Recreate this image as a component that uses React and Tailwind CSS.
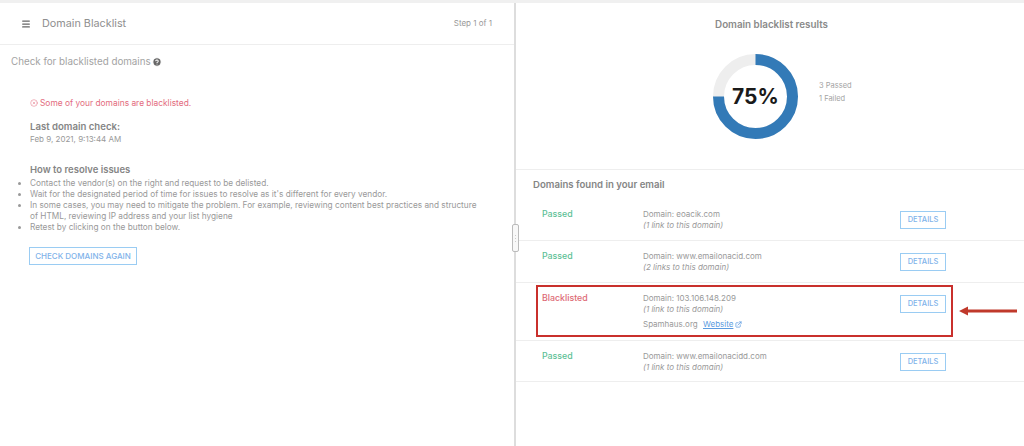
import { Menu, CircleHelp, CircleX, ExternalLink } from 'lucide-react';

const rows = [
  { status: 'Passed', domain: 'eoacik.com', links: '(1 link to this domain)', height: 'h-[42px]' },
  { status: 'Passed', domain: 'www.emailonacid.com', links: '(2 links to this domain)', height: 'h-[42px]' },
  { status: 'Blacklisted', domain: '103.106.148.209', links: '(1 link to this domain)', height: 'h-[58px]', vendor: true },
  { status: 'Passed', domain: 'www.emailonacidd.com', links: '(1 link to this domain)', height: 'h-[41px]' },
];

function DomainRow({ row }) {
  const failed = row.status === 'Blacklisted';
  return (
    <div className={`${row.height} flex border-b border-[#eeeeee] pl-[26px] pt-[8px]`}>
      <p className={`w-[101px] text-[8.8px] leading-[14px] font-medium ${failed ? 'text-[#dd6a75]' : 'text-[#5cc096]'}`}>{row.status}</p>
      <div className="w-[257px] text-[8px] leading-[11px] text-[#999999]">
        <p className="pt-[2px]">Domain: {row.domain}</p>
        <p className="italic">{row.links}</p>
        {row.vendor && (
          <p className="mt-[4px] flex items-center">
            <span className="w-[60px]">Spamhaus.org</span>
            <span className="text-[#5b9be0] underline">Website</span>
            <ExternalLink className="ml-[2px] size-[7px] text-[#5b9be0]" strokeWidth={2.5} />
          </p>
        )}
      </div>
      <button className="mt-[4px] h-[18px] w-[46px] border border-[#9accf3] text-[7.5px] font-medium text-[#7fb3ea]">DETAILS</button>
    </div>
  );
}

export default function App() {
  return (
    <div className="relative flex h-[446px] w-[1024px] overflow-hidden border-t-[3px] border-[#f0f0f0] bg-white font-['Inter',sans-serif]">
      <div className="w-[514px] shrink-0">
        <div className="flex h-[42px] items-center justify-between border-b border-[#eeeeee] pl-[21px] pr-[22px]">
          <div className="flex items-center gap-[11px] pt-[1px]">
            <Menu className="size-[10px] text-[#666666]" strokeWidth={3} />
            <span className="text-[10.8px] text-[#8f8f8f]">Domain Blacklist</span>
          </div>
          <span className="mb-[1px] text-[8px] text-[#999999]">Step 1 of 1</span>
        </div>
        <div className="flex items-center gap-[1px] pl-[11px] pt-[10px] text-[9.8px] leading-[14px] text-[#a3a3a3]">
          Check for blacklisted domains
          <CircleHelp className="size-[10px] fill-[#666666] text-white" strokeWidth={2.5} />
        </div>
        <div className="pl-[30px] pt-[28px]">
          <p className="flex items-center gap-[2px] text-[8.4px] leading-[12px] text-[#e36c7e]">
            <CircleX className="size-[8px]" strokeWidth={1.5} />
            Some of your domains are blacklisted.
          </p>
          <p className="pt-[11px] text-[9.6px] leading-[13px] font-semibold text-[#858585]">Last domain check:</p>
          <p className="pt-[1px] text-[8px] leading-[11px] text-[#999999]">Feb 9, 2021, 9:13:44 AM</p>
          <p className="pt-[18px] text-[9.5px] leading-[13px] font-semibold text-[#858585]">How to resolve issues</p>
          <ul className="mt-[2px] w-[455px] list-disc text-[8.25px] leading-[11px] text-[#999999]">
            <li>Contact the vendor(s) on the right and request to be delisted.</li>
            <li>Wait for the designated period of time for issues to resolve as it's different for every vendor.</li>
            <li>In some cases, you may need to mitigate the problem. For example, reviewing content best practices and structure of HTML, reviewing IP address and your list hygiene</li>
            <li>Retest by clicking on the button below.</li>
          </ul>
          <button className="-ml-[1px] mt-[14px] h-[18px] w-[108px] border border-[#9accf3] text-[8px] font-medium text-[#7fb3ea]">CHECK DOMAINS AGAIN</button>
        </div>
      </div>

      <div className="w-[2px] shrink-0 bg-[#dddddd]" />

      <div className="flex-1">
        <div className="flex h-[167px] flex-col items-center border-b border-[#eeeeee]">
          <p className="pt-[15px] pl-[3px] text-[9.8px] leading-[13px] font-semibold text-[#8a8a8a]">Domain blacklist results</p>
          <div className="mt-[23px] flex w-full pl-[197px]">
            <div className="relative size-[85px]">
              <svg viewBox="0 0 85 85" className="size-[85px]">
                <circle cx="42.5" cy="42.5" r="37" fill="none" stroke="#eeeeee" strokeWidth="11" />
                <circle cx="42.5" cy="42.5" r="37" fill="none" stroke="#337ab7" strokeWidth="11" pathLength="100" strokeDasharray="75 25" transform="rotate(-90 42.5 42.5)" />
              </svg>
              <span className="absolute inset-0 flex items-center justify-center text-[21px] font-bold text-[#1a1a1a]">75%</span>
            </div>
            <div className="pl-[21px] pt-[25px] text-[7.5px] leading-[13px] text-[#a3a3a3]">
              <p>3 Passed</p>
              <p>1 Failed</p>
            </div>
          </div>
        </div>
        <p className="pl-[17px] pt-[8px] text-[9.6px] leading-[13px] font-semibold text-[#858585]">Domains found in your email</p>
        <div className="mt-[8px]">
          {rows.map((row) => (
            <DomainRow key={row.domain} row={row} />
          ))}
        </div>
      </div>

      {/* splitter grip */}
      <div className="absolute left-[512px] top-[221px] flex h-[28px] w-[7px] flex-col items-center justify-center gap-[2px] rounded-[2px] border border-[#bbbbbb] bg-[#f8f8f8]">
        <span className="size-[1px] bg-[#cccccc]" />
        <span className="size-[1px] bg-[#cccccc]" />
        <span className="size-[1px] bg-[#cccccc]" />
      </div>

      {/* annotation drawn over the screenshot */}
      <div className="absolute left-[536px] top-[282px] h-[52px] w-[417px] border-2 border-[#c9302c]" />
      <svg className="absolute left-[958px] top-[302px]" width="60" height="12" viewBox="0 0 60 12">
        <path d="M1 6 L10 1.5 L10 4.5 L59 4.5 L59 7.5 L10 7.5 L10 10.5 Z" fill="#c0392b" />
      </svg>
    </div>
  );
}
